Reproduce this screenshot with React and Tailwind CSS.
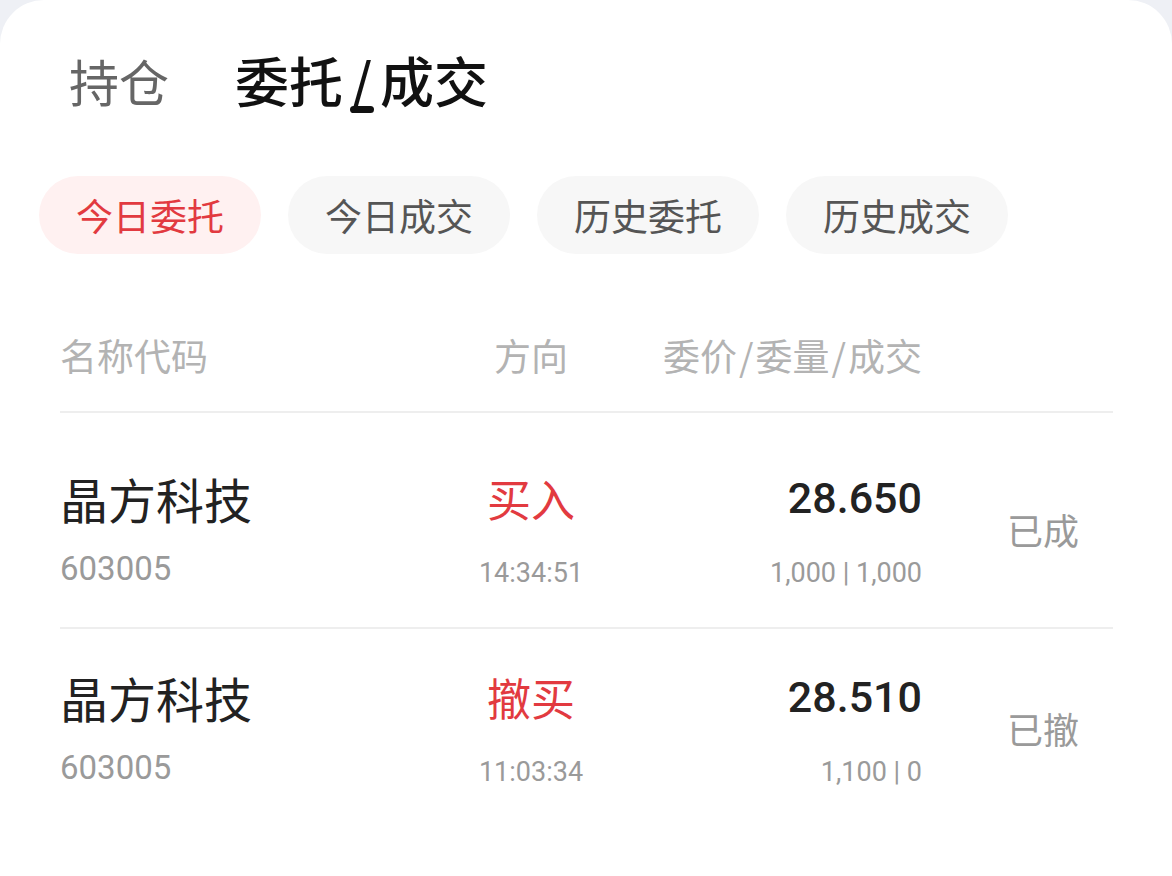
import React, { useState } from 'react';

const cjk = { fontFamily: '"Noto Sans CJK SC", "Noto Sans", sans-serif' };
const num = { fontFamily: 'Roboto, "Noto Sans CJK SC", sans-serif' };

const filters = ['今日委托', '今日成交', '历史委托', '历史成交'];

const orders = [
  { name: '晶方科技', code: '603005', side: '买入', time: '14:34:51', price: '28.650', qty: '1,000 | 1,000', status: '已成' },
  { name: '晶方科技', code: '603005', side: '撤买', time: '11:03:34', price: '28.510', qty: '1,100 | 0', status: '已撤' },
];

const App = () => {
  const [active, setActive] = useState(0);

  return (
    <div className="w-[1172px] h-[876px] bg-[#eef0f5] overflow-hidden" style={cjk}>
      <div className="h-full bg-white rounded-t-[44px]">
        {/* Top tabs */}
        <div className="flex items-center pl-[69px] pt-[50px] h-[110px]">
          <span className="text-[50px] leading-[60px] text-[#666666]">持仓</span>
          <span className="relative ml-[66px] text-[54px] leading-[60px] font-medium text-[#111111]">
            委托<span className="mx-[8px]">/</span>成交
            <span className="absolute left-1/2 -translate-x-1/2 top-[56px] w-6 h-[7px] rounded-full bg-[#111111]" />
          </span>
        </div>

        {/* Filter chips */}
        <div className="flex gap-[27px] pl-[39px] mt-[66px]">
          {filters.map((f, i) => (
            <button
              key={f}
              onClick={() => setActive(i)}
              className={
                'w-[222px] h-[78px] rounded-full text-[37px] leading-none flex items-center justify-center ' +
                (i === active ? 'bg-[#fff1f1] text-[#e23a40]' : 'bg-[#f7f7f7] text-[#555555]')
              }
            >
              {f}
            </button>
          ))}
        </div>

        {/* Table */}
        <div className="pl-[60px] pr-[59px] mt-[62px]">
          <div className="grid grid-cols-[380px_182px_300px_1fr] h-[78px] items-center text-[37px] text-[#b3b3b3] leading-none">
            <div>名称代码</div>
            <div className="text-center">方向</div>
            <div className="text-right">委价<span className="mx-[2px]">/</span>委量<span className="mx-[2px]">/</span>成交</div>
            <div />
          </div>
          <div className="mt-[17px] border-t-2 border-[#eeeeee]" />

          <div className="mt-[17px]">
            {orders.map((o, i) => (
              <div
                key={i}
                className={'grid grid-cols-[380px_182px_300px_1fr] pt-[38px] pb-[38px] ' + (i > 0 ? 'border-t-2 border-[#eeeeee] pt-[36px]' : '')}
              >
                <div>
                  <div className="h-[60px] flex items-center text-[48px] text-[#222222]">{o.name}</div>
                  <div className="mt-[21px] h-[40px] flex items-center text-[33px] text-[#9a9a9a]" style={num}>{o.code}</div>
                </div>
                <div className="text-center">
                  <div className="h-[60px] flex items-center justify-center text-[44px] text-[#e23a40]">{o.side}</div>
                  <div className="mt-[21px] h-[40px] flex items-center justify-center pt-[8px] text-[27px] text-[#9a9a9a]" style={num}>{o.time}</div>
                </div>
                <div className="text-right">
                  <div className="h-[60px] flex items-center justify-end text-[43px] text-[#222222] font-medium" style={num}>{o.price}</div>
                  <div className="mt-[21px] h-[40px] flex items-center justify-end pt-[8px] text-[27px] text-[#9a9a9a]" style={num}>{o.qty}</div>
                </div>
                <div className="self-center pl-[85px] text-[36px] text-[#9a9a9a] leading-none">{o.status}</div>
              </div>
            ))}
          </div>
        </div>
      </div>
    </div>
  );
};

export default App;
